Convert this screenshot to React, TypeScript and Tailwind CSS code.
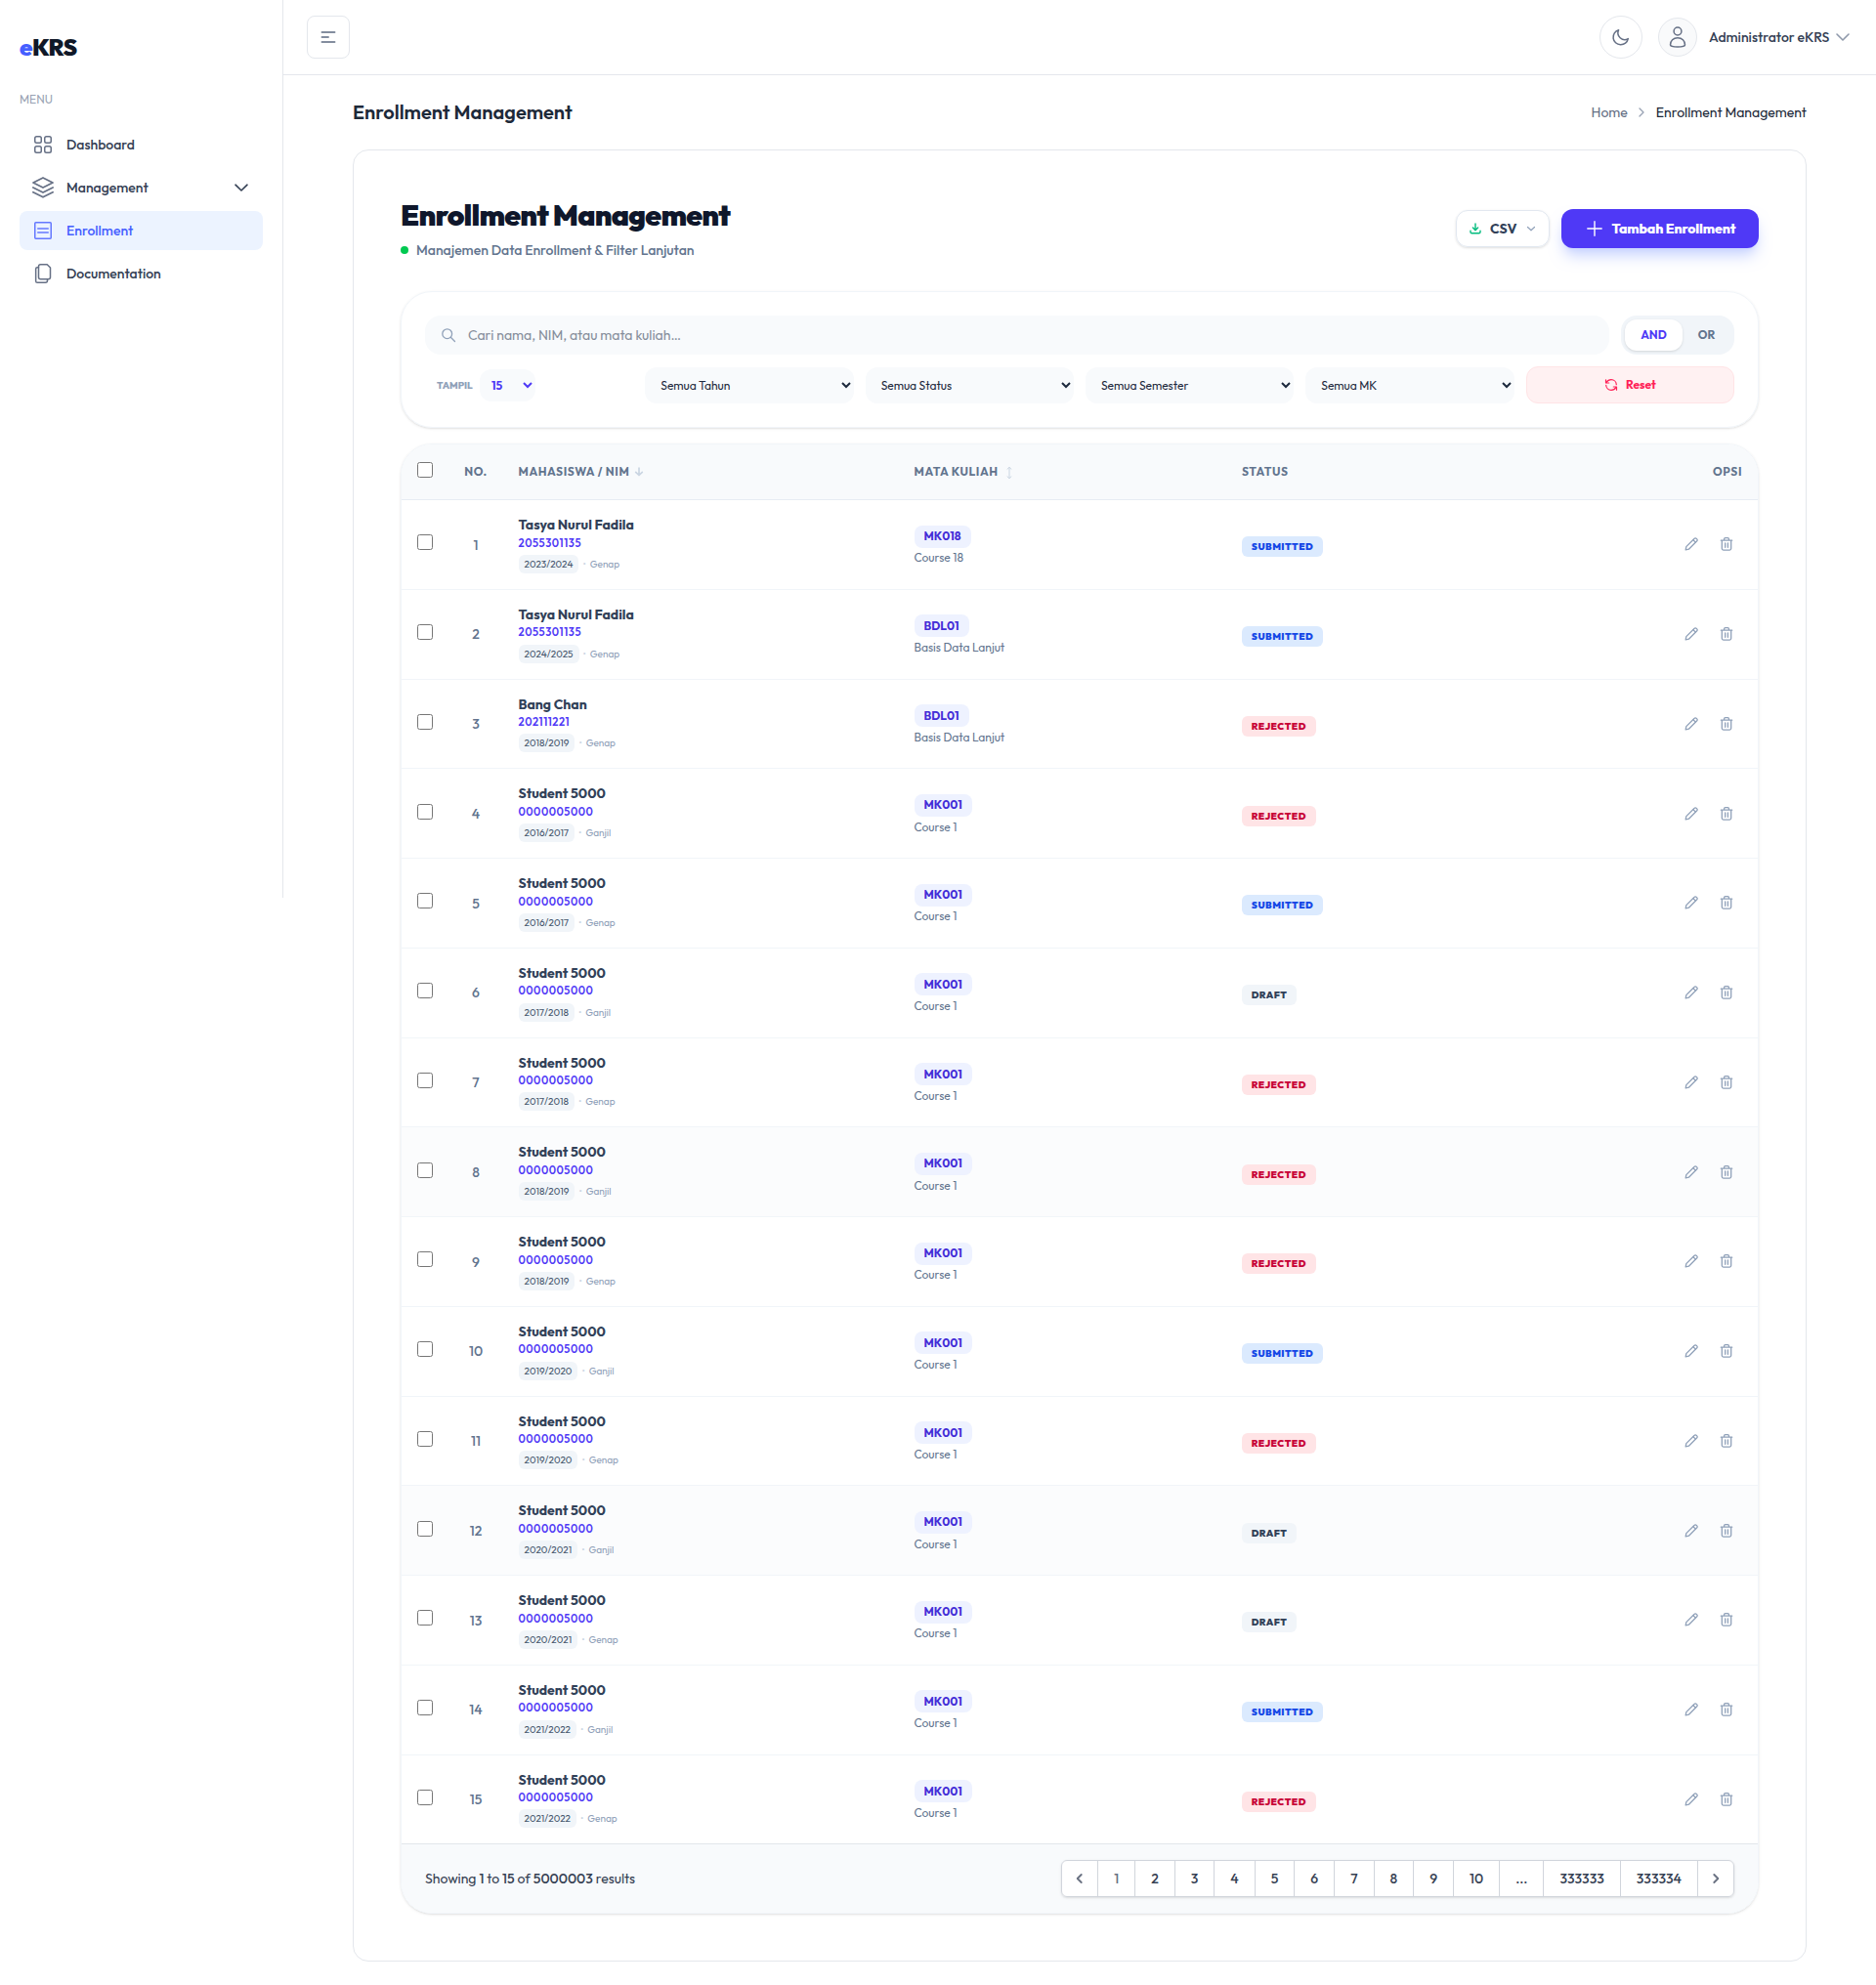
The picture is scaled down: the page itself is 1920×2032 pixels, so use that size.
import type { ReactNode } from "react";
import clsx from "clsx";

type Status = "SUBMITTED" | "REJECTED" | "DRAFT";

interface Enrollment {
  name: string;
  nim: string;
  year: string;
  semester: string;
  code: string;
  course: string;
  status: Status;
}

const student = (year: string, semester: string, status: Status): Enrollment => ({
  name: "Student 5000",
  nim: "0000005000",
  year,
  semester,
  code: "MK001",
  course: "Course 1",
  status,
});

const ROWS: Enrollment[] = [
  { name: "Tasya Nurul Fadila", nim: "2055301135", year: "2023/2024", semester: "Genap", code: "MK018", course: "Course 18", status: "SUBMITTED" },
  { name: "Tasya Nurul Fadila", nim: "2055301135", year: "2024/2025", semester: "Genap", code: "BDL01", course: "Basis Data Lanjut", status: "SUBMITTED" },
  { name: "Bang Chan", nim: "202111221", year: "2018/2019", semester: "Genap", code: "BDL01", course: "Basis Data Lanjut", status: "REJECTED" },
  student("2016/2017", "Ganjil", "REJECTED"),
  student("2016/2017", "Genap", "SUBMITTED"),
  student("2017/2018", "Ganjil", "DRAFT"),
  student("2017/2018", "Genap", "REJECTED"),
  student("2018/2019", "Ganjil", "REJECTED"),
  student("2018/2019", "Genap", "REJECTED"),
  student("2019/2020", "Ganjil", "SUBMITTED"),
  student("2019/2020", "Genap", "REJECTED"),
  student("2020/2021", "Ganjil", "DRAFT"),
  student("2020/2021", "Genap", "DRAFT"),
  student("2021/2022", "Ganjil", "SUBMITTED"),
  student("2021/2022", "Genap", "REJECTED"),
];

const SHADED_ROWS = [7, 11];

const STATUS_STYLE: Record<Status, string> = {
  SUBMITTED: "bg-blue-100 text-blue-700",
  REJECTED: "bg-rose-100 text-rose-700",
  DRAFT: "bg-slate-100 text-slate-700",
};

const PAGES = ["1", "2", "3", "4", "5", "6", "7", "8", "9", "10", "...", "333333", "333334"];

const FILTERS = ["Semua Tahun", "Semua Status", "Semua Semester", "Semua MK"];

const GRID = "grid grid-cols-[48px_56px_420.5px_335.5px_1fr]";

function Icon({ className, box = 24, width = 1.5, children }: { className?: string; box?: number; width?: number; children: ReactNode }) {
  return (
    <svg
      className={clsx("shrink-0", className)}
      viewBox={`0 0 ${box} ${box}`}
      fill="none"
      stroke="currentColor"
      strokeWidth={width}
      strokeLinecap="round"
      strokeLinejoin="round"
    >
      {children}
    </svg>
  );
}

function GridIcon() {
  return (
    <Icon className="size-6">
      <rect x="3.75" y="3.75" width="6.5" height="6.5" rx="1.75" />
      <rect x="13.75" y="3.75" width="6.5" height="6.5" rx="1.75" />
      <rect x="3.75" y="13.75" width="6.5" height="6.5" rx="1.75" />
      <rect x="13.75" y="13.75" width="6.5" height="6.5" rx="1.75" />
    </Icon>
  );
}

function LayersIcon() {
  return (
    <Icon className="size-6" width={1.8}>
      <path d="M12 2 22 7l-10 5L2 7z" />
      <path d="m1.900 12 10.100 5 10.100-5" />
      <path d="m1.900 16.800 10.100 5 10.100-5" />
    </Icon>
  );
}

function ListIcon() {
  return (
    <Icon className="size-6">
      <rect x="3.75" y="3.75" width="16.5" height="16.5" rx="1" />
      <path d="M6.750 10h10.500M6.750 14h10.500" />
    </Icon>
  );
}

function PagesIcon() {
  return (
    <Icon className="size-6">
      <path d="M9.500 2.750h6.700l3.300 3.300v9.700a2 2 0 0 1-2 2h-8a2 2 0 0 1-2-2v-11a2 2 0 0 1 2-2z" />
      <path d="M7.500 5.750H6.250a1.600 1.600 0 0 0-1.600 1.600v12.300a1.600 1.600 0 0 0 1.600 1.600h8.250a2 2 0 0 0 2-2v-1.500" />
    </Icon>
  );
}

function NavItem({ icon, label, active, open }: { icon: ReactNode; label: string; active?: boolean; open?: boolean }) {
  return (
    <li
      className={clsx(
        "flex h-10 items-center gap-3 rounded-lg px-3 text-sm font-medium",
        active ? "bg-[#ecf3ff] text-[#465fff]" : "text-[#344054]"
      )}
    >
      <span className={active ? "text-[#6478ff]" : "text-[#667085]"}>{icon}</span>
      <span>{label}</span>
      {open && (
        <Icon className="ml-auto size-5" box={20} width={1.6}>
          <path d="m4 7.200 6 5.800 6-5.800" />
        </Icon>
      )}
    </li>
  );
}

function Sidebar() {
  return (
    <aside className="h-[919px] w-[290px] shrink-0 border-r border-[#e4e7ec] px-5 pt-8">
      <div className="text-2xl leading-8 font-black tracking-tight text-[#101828]">
        <span className="text-[#465fff]">e</span>KRS
      </div>
      <h3 className="mt-7 text-xs leading-5 text-[#98a2b3]">MENU</h3>
      <ul className="mt-4 flex flex-col gap-1">
        <NavItem icon={<GridIcon />} label="Dashboard" />
        <NavItem icon={<LayersIcon />} label="Management" open />
        <NavItem icon={<ListIcon />} label="Enrollment" active />
        <NavItem icon={<PagesIcon />} label="Documentation" />
      </ul>
    </aside>
  );
}

function Topbar() {
  return (
    <header className="flex h-[77px] items-center justify-between border-b border-[#e4e7ec] px-6">
      <button className="flex size-11 items-center justify-center rounded-lg border border-[#e4e7ec] text-[#838d9f]">
        <Icon className="size-4" box={16} width={1.9}>
          <path d="M1.500 3h13M1.500 8h6.500M1.500 13h13" />
        </Icon>
      </button>
      <div className="flex items-center pr-px text-[#667085]">
        <button className="flex size-11 items-center justify-center rounded-full border border-[#e4e7ec]">
          <Icon className="size-5" box={20}>
            <path d="M7.600 2.700a6.900 6.900 0 0 0 9.700 8.900A7.700 7.700 0 1 1 7.600 2.700z" />
          </Icon>
        </button>
        <div className="ml-4 flex size-10 items-center justify-center rounded-full border border-[#e4e7ec] bg-[#f9fafb]">
          <Icon className="size-6">
            <circle cx="12" cy="6" r="3.9" />
            <path d="M12 12.800c-4.400 0-7.500 3-7.500 7.200 0 1 3 2 7.500 2s7.500-1 7.500-2c0-4.200-3.100-7.200-7.500-7.200z" />
          </Icon>
        </div>
        <span className="ml-3 w-[124px] text-sm font-medium whitespace-nowrap text-[#344054]">Administrator eKRS</span>
        <Icon className="ml-1 size-[18px] text-[#8f99ab]" box={18} width={1.6}>
          <path d="m3 6 6 6 6-6" />
        </Icon>
      </div>
    </header>
  );
}

function PageHeader() {
  return (
    <div className="flex items-start justify-between">
      <div>
        <h1 className="text-3xl leading-9 font-black tracking-tight text-slate-900">Enrollment Management</h1>
        <p className="mt-2 flex items-center gap-2 text-sm leading-5 font-medium text-slate-500">
          <span className="size-2 rounded-full bg-green-500" />
          Manajemen Data Enrollment &amp; Filter Lanjutan
        </p>
      </div>
      <div className="mt-3 flex items-center gap-3">
        <button className="flex h-[38px] w-24 items-center rounded-xl border border-slate-200 pl-3 text-sm font-bold text-slate-700 shadow-sm">
          <Icon className="size-3.5 text-emerald-500" box={14} width={1.4}>
            <path d="M7 2v6.500M4.400 6.100 7 8.700l2.600-2.600M2 9.300v1.200c0 .8.500 1.300 1.300 1.300h7.400c.8 0 1.300-.5 1.300-1.300V9.300" />
          </Icon>
          <span className="ml-2 w-[27px]">CSV</span>
          <Icon className="ml-[9px] size-3 text-slate-400" box={12} width={1.2}>
            <path d="m2.500 4.500 3.500 3.300 3.500-3.300" />
          </Icon>
        </button>
        <button className="flex h-10 w-[202px] items-center rounded-xl bg-indigo-600 pl-6 text-sm font-extrabold tracking-[-0.1px] whitespace-nowrap text-white shadow-lg shadow-indigo-200">
          <Icon className="size-5" box={20} width={1.4}>
            <path d="M10 2.800v14.400M2.800 10h14.400" />
          </Icon>
          <span className="ml-[7.5px]">Tambah Enrollment</span>
        </button>
      </div>
    </div>
  );
}

function FilterPanel() {
  return (
    <div className="mt-8 rounded-[32px] border border-slate-100 p-6 shadow-sm">
      <div className="flex gap-3">
        <div className="flex h-10 flex-1 items-center rounded-2xl bg-slate-50 pl-4 text-sm text-[#868e9b]">
          <Icon className="size-4 text-slate-400" box={16} width={1.3}>
            <circle cx="6.7" cy="6.7" r="4.9" />
            <path d="m10.300 10.300 4.200 4.200" />
          </Icon>
          <span className="ml-3">Cari nama, NIM, atau mata kuliah…</span>
        </div>
        <div className="flex w-[116px] rounded-2xl bg-slate-100 p-1 text-xs font-bold">
          <button className="h-8 w-[59px] rounded-xl bg-white text-indigo-600 shadow-sm">AND</button>
          <button className="h-8 w-[49px] text-slate-500">OR</button>
        </div>
      </div>
      <div className="mt-3 grid grid-cols-6 gap-3">
        <div className="flex items-center pl-3">
          <span className="w-11 text-[10px] font-extrabold text-slate-400">TAMPIL</span>
          <select className="h-[33px] w-[57px] rounded-xl bg-slate-50 px-2 text-xs font-bold text-indigo-600">
            <option>15</option>
          </select>
        </div>
        {FILTERS.map((label) => (
          <select key={label} className="mt-px h-[37px] w-full rounded-xl bg-slate-50 px-3 text-xs text-slate-800">
            <option>{label}</option>
          </select>
        ))}
        <button className="flex h-[38px] items-center justify-center gap-2 rounded-xl border border-rose-100 bg-rose-50 text-xs font-bold text-rose-500">
          <Icon className="size-3.5" box={14} width={1.2}>
            <path d="M1.500 1.800v3.200h3.200M12.500 12.200V9H9.300" />
            <path d="M2 4.600C3 2.900 4.800 1.700 7 1.700c2.900 0 5.200 2.200 5.300 5M12 9.400c-1 1.700-2.800 2.900-5 2.900-2.900 0-5.200-2.200-5.300-5" />
          </Icon>
          <span>Reset</span>
        </button>
      </div>
    </div>
  );
}

function TableHead() {
  return (
    <div className={clsx(GRID, "h-[57px] border-b border-slate-200/80 bg-slate-50 text-xs font-bold tracking-wider text-slate-500")}>
      <div className="pt-[18px] pl-4">
        <input type="checkbox" className="block size-4" />
      </div>
      <div className="flex items-center justify-center">NO.</div>
      <div className="flex items-center pl-[15.5px]">
        MAHASISWA / NIM
        <Icon className="ml-[5px] size-2.5 text-slate-300" box={10} width={1.7}>
          <path d="M5 1.200v7M1.700 5.300 5 8.500l3.300-3.200" />
        </Icon>
      </div>
      <div className="flex items-center">
        MATA KULIAH
        <Icon className="mt-0.5 ml-1 size-3.5 text-slate-300" box={14} width={1}>
          <path d="M7 1.500v11M5 3.200l2-1.900 2 1.900M5 10.800l2 1.900 2-1.900" />
        </Icon>
      </div>
      <div className="flex items-center justify-between pr-4">
        <span>STATUS</span>
        <span>OPSI</span>
      </div>
    </div>
  );
}

function TableRow({ row, index }: { row: Enrollment; index: number }) {
  const last = index === ROWS.length - 1;
  return (
    <div
      className={clsx(
        GRID,
        last ? "h-[90.75px]" : "h-[91.75px] border-b border-slate-100",
        SHADED_ROWS.includes(index) && "bg-slate-50/60"
      )}
    >
      <div className="pt-[35.3px] pl-4">
        <input type="checkbox" className="block size-4" />
      </div>
      <div className="pt-[35.7px] text-center text-sm leading-5 font-medium text-slate-500">{index + 1}</div>
      <div className="pt-[15px] pl-[15.5px]">
        <div className="text-sm leading-5 font-bold text-slate-700">{row.name}</div>
        <div className="mt-[0.5px] text-[11px] leading-4 font-semibold tracking-wider text-indigo-600">{row.nim}</div>
        <div className="mt-[4.25px] flex items-center text-[10px] text-slate-400">
          <span className="flex h-[19px] items-center rounded-md bg-slate-100 px-1.5 text-slate-600">{row.year}</span>
          <span className="ml-1 text-slate-300">•</span>
          <span className="ml-1">{row.semester}</span>
        </div>
      </div>
      <div className="pt-[25.5px]">
        <span className="flex h-[23px] w-fit items-center rounded-lg bg-indigo-50 px-2.5 text-xs font-bold text-indigo-700">
          {row.code}
        </span>
        <div className="mt-[2.8px] text-xs leading-4 text-slate-500">{row.course}</div>
      </div>
      <div className="flex justify-between pr-6">
        <span
          className={clsx(
            "mt-[37.3px] flex h-[21px] items-center rounded-md px-[9.7px] text-[10px] font-black tracking-wider",
            STATUS_STYLE[row.status]
          )}
        >
          {row.status}
        </span>
        <div className="mt-[37.3px] flex gap-5 text-slate-400">
          <Icon className="size-4" box={16} width={1.3}>
            <path d="M11.200 2.200a1.300 1.300 0 0 1 1.900 0l.7.700a1.300 1.300 0 0 1 0 1.900l-8.400 8.400-3.200.6.600-3.200z" />
            <path d="m10 3.800 2.300 2.300" />
          </Icon>
          <Icon className="size-4" box={16} width={1.3}>
            <path d="M2.300 4.200h11.400M5.600 4V2.800c0-.6.500-1.100 1.100-1.100h2.600c.6 0 1.100.5 1.100 1.100V4M3.300 4.400v8.200c0 .8.700 1.500 1.500 1.500h6.400c.8 0 1.500-.7 1.500-1.500V4.400M6.700 7v4.300M9.400 7v4.300" />
          </Icon>
        </div>
      </div>
    </div>
  );
}

function Pagination() {
  return (
    <div className="flex h-[71px] items-center justify-between border-t border-[#e2e6eb] bg-slate-50 px-6 text-sm text-gray-700">
      <p>
        Showing <span className="font-medium">1</span> to <span className="font-medium">15</span> of{" "}
        <span className="font-medium">5000003</span> results
      </p>
      <nav className="flex h-[38px] rounded-md bg-white leading-5 font-medium shadow-sm">
        <span className="flex items-center rounded-l-md border border-gray-300 px-2 text-gray-500">
          <Icon className="size-5" box={20} width={1.9}>
            <path d="m11.700 6-4 4 4 4" />
          </Icon>
        </span>
        {PAGES.map((label) => (
          <span
            key={label}
            className={clsx("-ml-px flex items-center border border-gray-300 px-4", label === "1" && "text-gray-500")}
          >
            {label}
          </span>
        ))}
        <span className="-ml-px flex items-center rounded-r-md border border-gray-300 px-2 text-gray-500">
          <Icon className="size-5" box={20} width={1.9}>
            <path d="m8.300 6 4 4-4 4" />
          </Icon>
        </span>
      </nav>
    </div>
  );
}

export default function App() {
  return (
    <div className="flex min-h-[2032px] w-[1920px] bg-white font-['Outfit','Lato',sans-serif]">
      <Sidebar />
      <div className="flex-1">
        <Topbar />
        <main className="mx-auto max-w-[1536px] p-6">
          <div className="mb-6 flex items-center justify-between">
            <h2 className="text-xl leading-7 font-semibold text-[#1d2939]">Enrollment Management</h2>
            <nav className="flex items-center text-sm text-[#667085]">
              <span>Home</span>
              <Icon className="mx-[6.5px] size-4 text-[#98a2b3]" box={16} width={1.3}>
                <path d="m6 4 4 4-4 4" />
              </Icon>
              <span className="text-[#1d2939]">Enrollment Management</span>
            </nav>
          </div>
          <div className="rounded-2xl border border-[#e4e7ec] p-12">
            <PageHeader />
            <FilterPanel />
            <div className="mt-4 overflow-hidden rounded-[32px] border border-slate-100 shadow-sm">
              <TableHead />
              {ROWS.map((row, i) => (
                <TableRow key={i} row={row} index={i} />
              ))}
              <Pagination />
            </div>
          </div>
        </main>
      </div>
    </div>
  );
}
